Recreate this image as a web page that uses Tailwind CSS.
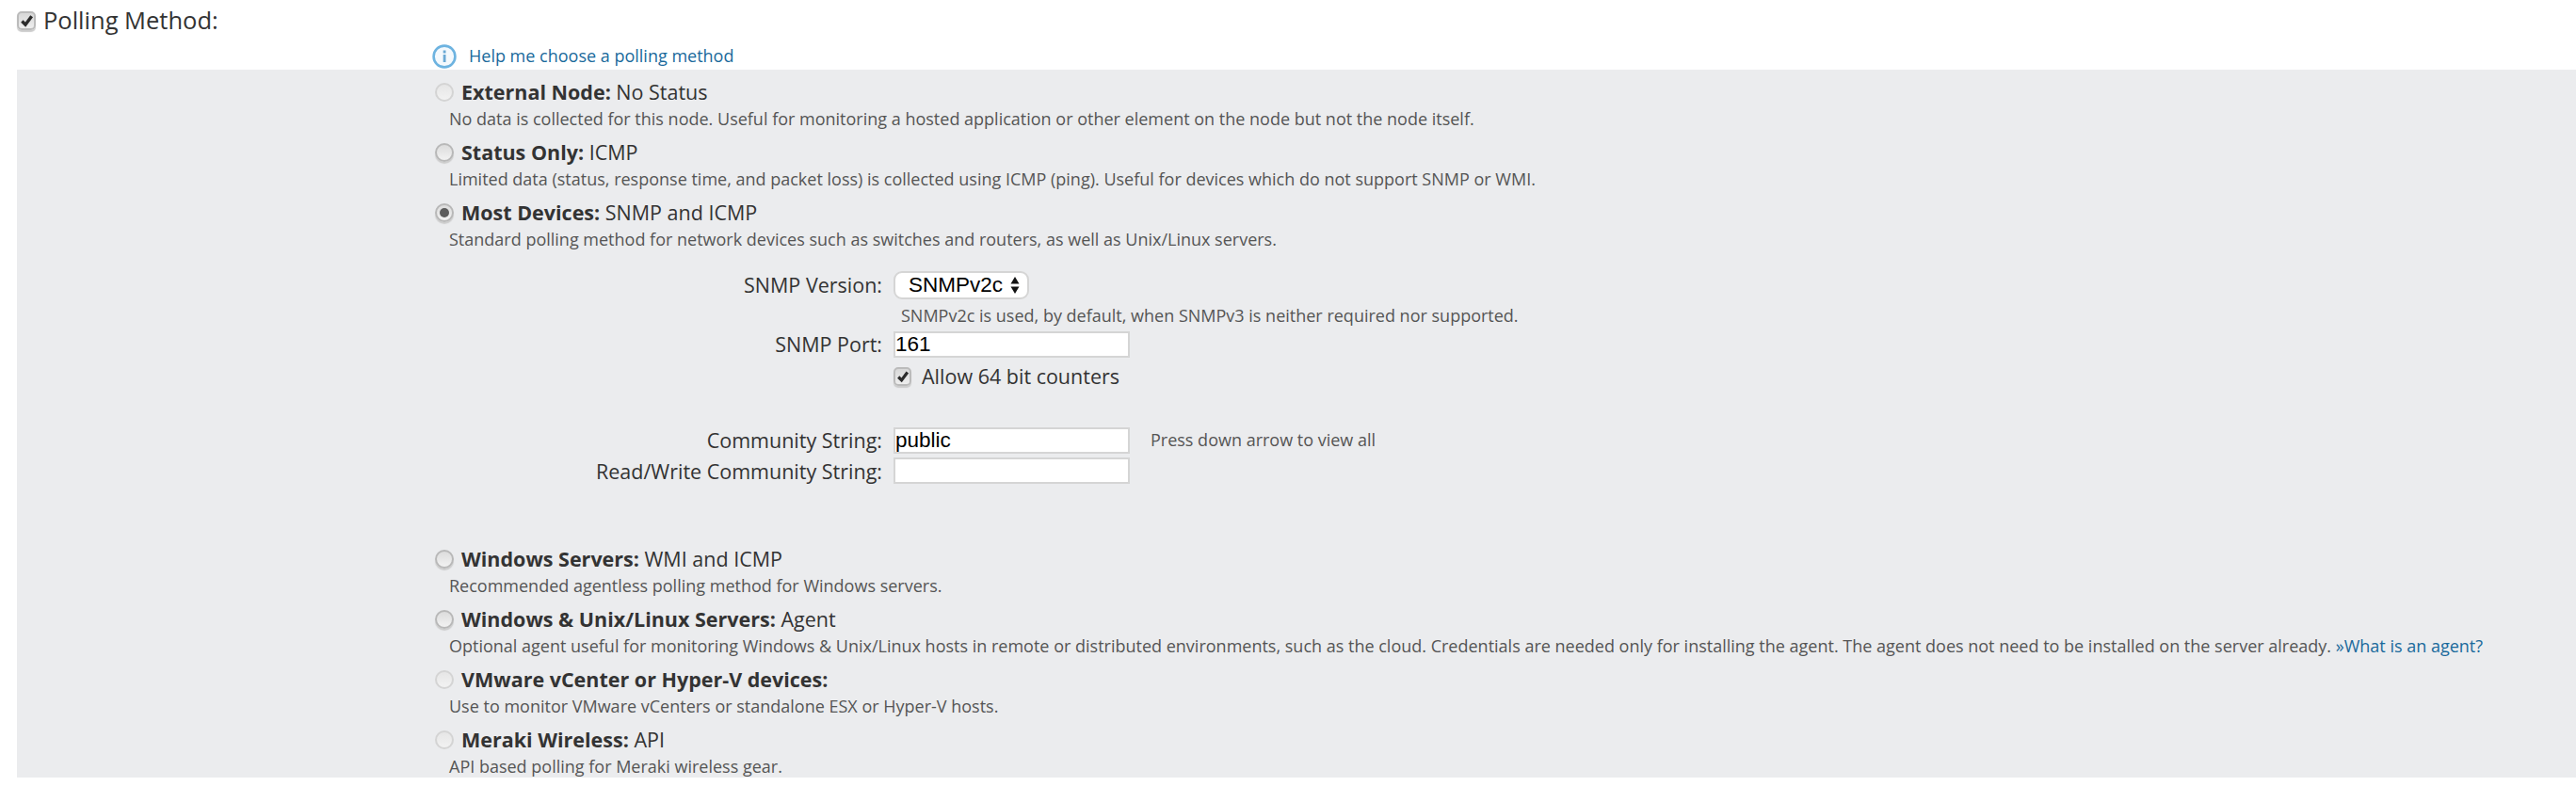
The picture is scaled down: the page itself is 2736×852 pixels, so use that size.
<!DOCTYPE html>
<html lang="en">
<head>
    <meta charset="UTF-8">
    <meta name="viewport" content="width=device-width, initial-scale=1.0">
    <title>Polling Method</title>
    <script src="https://cdn.jsdelivr.net/npm/@tailwindcss/browser@4"></script>
</head>
<body class="bg-white font-['Open_Sans',sans-serif] text-[#333] overflow-hidden">
    <!-- header row -->
    <div class="flex items-center h-[43px] pl-[18px] gap-[8px]">
        <span class="flex items-center justify-center w-[20px] h-[20px] rounded-[5px] border-2 border-[#bbb] bg-linear-to-b from-[#d8d8d8] to-[#eee] shadow-[0_2px_1px_#ccc]">
            <svg width="15" height="14" viewBox="0 0 14 13"><path d="M2.2 7 L5.6 10.4 L11.8 2" fill="none" stroke="#2b2b2b" stroke-width="3.2"/></svg>
        </span>
        <span class="text-[25.5px] leading-none">Polling Method:</span>
    </div>

    <div class="flex items-center h-[31px] pt-[2px] pl-[459px] gap-[13px]">
        <svg width="26" height="26" viewBox="0 0 26 26">
            <circle cx="13" cy="13" r="11.4" fill="#f4f9fd" stroke="#6db3e0" stroke-width="2.6"/>
            <rect x="11.7" y="11" width="2.8" height="8" fill="#6aa9d5"/>
            <rect x="11.7" y="6.5" width="2.8" height="3" fill="#6aa9d5"/>
        </svg>
        <a class="text-[18px] text-[#1a6a9c]">Help me choose a polling method</a>
    </div>

    <div class="ml-[18px] h-[752px] bg-[#ebecee] pl-[444px] pt-[6px]">
        <div class="flex flex-col h-[64px]">
            <div class="flex items-center h-[36px] gap-[8px]">
                <span class="w-[20px] h-[20px] rounded-full border-2 border-[#d4d4d4] bg-linear-to-b from-[#e6e6e6] to-[#f2f2f2]"></span>
                <span class="text-[21.5px]"><b>External Node:</b> No Status</span>
            </div>
            <p class="text-[18px] leading-[20px] ml-[15px] text-[#555]">No data is collected for this node. Useful for monitoring a hosted application or other element on the node but not the node itself.</p>
        </div>
        <div class="flex flex-col h-[64px]">
            <div class="flex items-center h-[36px] gap-[8px]">
                <span class="w-[20px] h-[20px] rounded-full border-2 border-[#b8b8b8] bg-linear-to-b from-[#dcdcdc] to-[#f2f2f2] shadow-[0_2px_1px_#ccc]"></span>
                <span class="text-[21.5px]"><b>Status Only:</b> ICMP</span>
            </div>
            <p class="text-[18px] leading-[20px] ml-[15px] text-[#555]">Limited data (status, response time, and packet loss) is collected using ICMP (ping). Useful for devices which do not support SNMP or WMI.</p>
        </div>
        <div class="flex flex-col h-[64px]">
            <div class="flex items-center h-[36px] gap-[8px]">
                <span class="flex items-center justify-center w-[20px] h-[20px] rounded-full border-2 border-[#b8b8b8] bg-linear-to-b from-[#dcdcdc] to-[#f2f2f2] shadow-[0_2px_1px_#ccc]"><span class="w-[10px] h-[10px] rounded-full bg-[#5c5c5c]"></span></span>
                <span class="text-[21.5px]"><b>Most Devices:</b> SNMP and ICMP</span>
            </div>
            <p class="text-[18px] leading-[20px] ml-[15px] text-[#555]">Standard polling method for network devices such as switches and routers, as well as Unix/Linux servers.</p>
        </div>

        <!-- snmp form -->
        <div class="grid grid-cols-[475px_1fr] gap-x-[12px] pt-[16px] h-[304px] content-start items-center text-[21.5px] leading-[26px]">
            <label class="text-right">SNMP Version:</label>
            <span class="flex items-center w-[144px] h-[30px] rounded-[9px] border-2 border-[#d5d5d5] bg-white pl-[14px] gap-[8px] font-['Liberation_Sans',sans-serif] text-[22.5px] text-black">SNMPv2c
                <svg width="10" height="20" viewBox="0 0 10 20"><path d="M5 1 L9.5 8.5 H.5Z M5 19 L.5 11.5 H9.5Z" fill="#111"/></svg>
            </span>
            <span></span>
            <p class="text-[18px] h-[34px] leading-[34px] ml-[8px] text-[#555]">SNMPv2c is used, by default, when SNMPv3 is neither required nor supported.</p>
            <label class="text-right">SNMP Port:</label>
            <input value="161" class="w-[251px] h-[28px] border-2 border-[#d5d5d5] bg-white px-0 font-['Liberation_Sans',sans-serif] text-[22.5px] text-black">
            <span></span>
            <div class="flex items-center gap-[11px] h-[40px] mb-[34px]">
                <span class="flex items-center justify-center w-[19px] h-[20px] rounded-[5px] border-2 border-[#bbb] bg-linear-to-b from-[#d8d8d8] to-[#eee] shadow-[0_2px_1px_#ccc]">
                    <svg width="14" height="14" viewBox="0 0 14 13"><path d="M2.2 7 L5.6 10.4 L11.8 2" fill="none" stroke="#2b2b2b" stroke-width="3.2"/></svg>
                </span>
                <span>Allow 64 bit counters</span>
            </div>
            <label class="text-right">Community String:</label>
            <div class="flex items-center gap-[22px]">
                <input value="public" class="w-[251px] h-[28px] border-2 border-[#d5d5d5] bg-white px-0 font-['Liberation_Sans',sans-serif] text-[22.5px] text-black">
                <span class="text-[18px] text-[#555] -mt-[2px]">Press down arrow to view all</span>
            </div>
            <label class="text-right mt-[6px]">Read/Write Community String:</label>
            <input class="w-[251px] h-[28px] mt-[4px] border-2 border-[#d5d5d5] bg-white">
        </div>

        <div class="flex flex-col h-[64px]">
            <div class="flex items-center h-[36px] gap-[8px]">
                <span class="w-[20px] h-[20px] rounded-full border-2 border-[#b8b8b8] bg-linear-to-b from-[#dcdcdc] to-[#f2f2f2] shadow-[0_2px_1px_#ccc]"></span>
                <span class="text-[21.5px]"><b>Windows Servers:</b> WMI and ICMP</span>
            </div>
            <p class="text-[18px] leading-[20px] ml-[15px] text-[#555]">Recommended agentless polling method for Windows servers.</p>
        </div>
        <div class="flex flex-col h-[64px]">
            <div class="flex items-center h-[36px] gap-[8px]">
                <span class="w-[20px] h-[20px] rounded-full border-2 border-[#b8b8b8] bg-linear-to-b from-[#dcdcdc] to-[#f2f2f2] shadow-[0_2px_1px_#ccc]"></span>
                <span class="text-[21.5px]"><b>Windows &amp; Unix/Linux Servers:</b> Agent</span>
            </div>
            <p class="text-[18px] leading-[20px] ml-[15px] text-[#555] whitespace-nowrap">Optional agent useful for monitoring Windows &amp; Unix/Linux hosts in remote or distributed environments, such as the cloud. Credentials are needed only for installing the agent. The agent does not need to be installed on the server already. <a class="text-[#1a6a9c]">»What is an agent?</a></p>
        </div>
        <div class="flex flex-col h-[64px]">
            <div class="flex items-center h-[36px] gap-[8px]">
                <span class="w-[20px] h-[20px] rounded-full border-2 border-[#d4d4d4] bg-linear-to-b from-[#e6e6e6] to-[#f2f2f2]"></span>
                <span class="text-[21.5px]"><b>VMware vCenter or Hyper-V devices:</b></span>
            </div>
            <p class="text-[18px] leading-[20px] ml-[15px] text-[#555]">Use to monitor VMware vCenters or standalone ESX or Hyper-V hosts.</p>
        </div>
        <div class="flex flex-col h-[64px]">
            <div class="flex items-center h-[36px] gap-[8px]">
                <span class="w-[20px] h-[20px] rounded-full border-2 border-[#d4d4d4] bg-linear-to-b from-[#e6e6e6] to-[#f2f2f2]"></span>
                <span class="text-[21.5px]"><b>Meraki Wireless:</b> API</span>
            </div>
            <p class="text-[18px] leading-[20px] ml-[15px] text-[#555]">API based polling for Meraki wireless gear.</p>
        </div>
    </div>
</body>
</html>
